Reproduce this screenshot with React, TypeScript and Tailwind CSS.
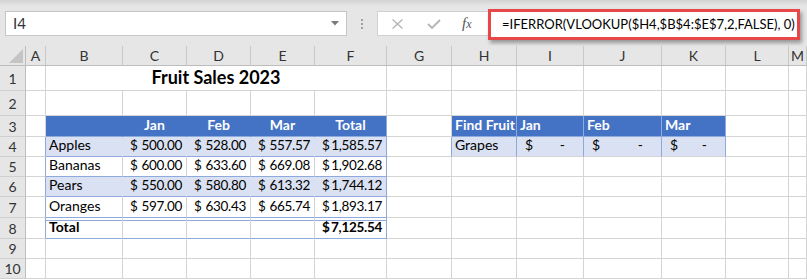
import React from "react";

const cellFont = { fontFamily: "Lato, 'Noto Sans', sans-serif" };

type CellProps = {
  className?: string;
  rc?: string;
  bc?: string;
  children?: React.ReactNode;
};

function Cell({ className = "", rc = "border-r-[#d4d4d4]", bc = "border-b-[#d4d4d4]", children }: CellProps) {
  return (
    <div className={`border-r border-b ${rc} ${bc} flex items-end overflow-hidden whitespace-nowrap text-[14px] leading-none text-black pb-[4px] ${className}`}>
      {children}
    </div>
  );
}

function RowHead({ n }: { n: number }) {
  return (
    <div className="bg-[#e6e6e6] border-r border-b border-r-[#bdbdbd] border-b-[#d0d0d0] flex items-center justify-center text-[14px] text-[#333]">
      {n}
    </div>
  );
}

function ColHead({ l }: { l: string }) {
  return (
    <div className="bg-[#e6e6e6] border-r border-b border-r-[#c8c8c8] border-b-[#bdbdbd] flex items-center justify-center text-[14px] text-[#333]">
      {l}
    </div>
  );
}

function Money({ v, bold = false }: { v: string; bold?: boolean }) {
  return (
    <div className={`flex w-full justify-between pl-[7px] pr-[4px] text-[13.5px] tracking-[-0.3px] ${bold ? "font-bold" : ""}`}>
      <span>$</span>
      <span>{v}</span>
    </div>
  );
}

const BLUE = "bg-[#4472c4]";
const LIGHT = "bg-[#d9e1f2]";
const DBL = "shadow-[inset_0_2px_0_#ffffff,inset_0_3px_0_#8ea9db]";

export default function App() {
  const rows = [
    { name: "Apples", v: ["500.00", "528.00", "557.57", "1,585.57"], fill: true },
    { name: "Bananas", v: ["600.00", "633.60", "669.08", "1,902.68"], fill: false },
    { name: "Pears", v: ["550.00", "580.80", "613.32", "1,744.12"], fill: true },
    { name: "Oranges", v: ["597.00", "630.43", "665.74", "1,893.17"], fill: false },
  ];
  const cols = ["A", "B", "C", "D", "E", "F", "G", "H", "I", "J", "K", "L", "M"];

  const emptyTail = (from: number) =>
    cols.slice(from).map((c) => <Cell key={c} />);

  return (
    <div className="w-[807px] h-[280px] overflow-hidden bg-white" style={cellFont}>
      {/* Formula bar area */}
      <div className="h-[46px] bg-[linear-gradient(#d2d2d2_0px,#e6e6e6_6px)] flex items-start pt-[11px]">
        <div className="ml-[5px] w-[342px] h-[25px] bg-white border border-[#c6c6c6] flex items-center justify-between pl-[7px] pr-[7px]">
          <span className="text-[15px] text-[#333]">I4</span>
          <svg width="8" height="5" viewBox="0 0 8 5"><path d="M0 0H8L4 4.5Z" fill="#7a7a7a" /></svg>
        </div>
        <div className="w-[30px] h-[25px] flex flex-col items-center justify-center gap-[2px]">
          <div className="w-[2px] h-[2px] bg-[#a0a0a0]" />
          <div className="w-[2px] h-[2px] bg-[#a0a0a0]" />
          <div className="w-[2px] h-[2px] bg-[#a0a0a0]" />
        </div>
        <div className="w-[111px] h-[25px] bg-white border-y border-l border-[#d0d0d0] flex items-center">
          <svg className="ml-[14px]" width="11" height="10" viewBox="0 0 11 10">
            <path d="M0.5 0.5L10.5 9.5M10.5 0.5L0.5 9.5" stroke="#b4b4b4" strokeWidth="1.3" fill="none" />
          </svg>
          <svg className="ml-[24px]" width="14" height="10" viewBox="0 0 14 10">
            <path d="M1 5L5 9L13 1" stroke="#b4b4b4" strokeWidth="1.8" fill="none" />
          </svg>
          <span className="ml-[21px] text-[15px] italic text-[#555]" style={{ fontFamily: "'Liberation Serif', serif" }}>
            f<span className="text-[12px]">x</span>
          </span>
        </div>
        <div className="-mt-[2px] w-[312px] h-[31px] bg-white border-[3px] border-[#e8474a] shadow-[2px_3px_4px_rgba(0,0,0,0.35)] flex items-center pl-[11px]">
          <span className="text-[13px] text-black whitespace-nowrap">=IFERROR(VLOOKUP($H4,$B$4:$E$7,2,FALSE), 0)</span>
        </div>
      </div>

      {/* Grid */}
      <div className="grid grid-cols-[26px_20px_77px_64px_64px_64px_72px_65px_65px_67px_78px_64px_63px_1fr] grid-rows-[20px_25px_25px_21px_20px_20px_20px_21px_21px_20px_20px]">
        {/* column header */}
        <div className="bg-[#e6e6e6] border-r border-b border-r-[#bdbdbd] border-b-[#bdbdbd] relative">
          <svg className="absolute right-[2px] bottom-[2px]" width="14" height="14" viewBox="0 0 14 14">
            <path d="M14 0V14H0Z" fill="#c4c4c4" />
          </svg>
        </div>
        {cols.map((c) => (
          <ColHead key={c} l={c} />
        ))}

        {/* Row 1 */}
        <RowHead n={1} />
        <Cell />
        <div className="col-span-5 border-r border-b border-r-[#d4d4d4] border-b-[#d4d4d4] flex items-end justify-center pb-[4px] text-[18px] font-bold leading-none">
          Fruit Sales 2023
        </div>
        {emptyTail(6)}

        {/* Row 2 */}
        <RowHead n={2} />
        {emptyTail(0)}

        {/* Row 3 */}
        <RowHead n={3} />
        <Cell />
        <Cell className={BLUE} rc="border-r-[#4472c4]" bc="border-b-[#8ea9db]" />
        {["Jan", "Feb", "Mar"].map((m) => (
          <Cell key={m} className={`${BLUE} justify-center font-bold text-white`} rc="border-r-[#4472c4]" bc="border-b-[#8ea9db]">
            {m}
          </Cell>
        ))}
        <Cell className={`${BLUE} justify-center font-bold text-white`} rc="border-r-[#8ea9db]" bc="border-b-[#8ea9db]">
          Total
        </Cell>
        <Cell />
        <Cell className={`${BLUE} font-bold text-white pl-[3px]`} rc="border-r-[#8ea9db]" bc="border-b-[#8ea9db]">
          Find Fruit
        </Cell>
        {["Jan", "Feb", "Mar"].map((m) => (
          <Cell key={m} className={`${BLUE} font-bold text-white pl-[3px]`} rc="border-r-[#8ea9db]" bc="border-b-[#8ea9db]">
            {m}
          </Cell>
        ))}
        <Cell />
        <Cell />

        {/* Rows 4-7 */}
        {rows.map((r, i) => {
          const fill = r.fill ? LIGHT : "";
          const inner = r.fill ? "border-r-[#d9e1f2]" : "border-r-[#d4d4d4]";
          return (
            <React.Fragment key={r.name}>
              <RowHead n={i + 4} />
              <Cell rc="border-r-[#8ea9db]" />
              <Cell className={`${fill} pl-[3px]`} rc={inner} bc="border-b-[#8ea9db]">
                {r.name}
              </Cell>
              <Cell className={fill} rc={inner} bc="border-b-[#8ea9db]">
                <Money v={r.v[0]} />
              </Cell>
              <Cell className={fill} rc={inner} bc="border-b-[#8ea9db]">
                <Money v={r.v[1]} />
              </Cell>
              <Cell className={fill} rc={inner} bc="border-b-[#8ea9db]">
                <Money v={r.v[2]} />
              </Cell>
              <Cell className={fill} rc="border-r-[#8ea9db]" bc="border-b-[#8ea9db]">
                <Money v={r.v[3]} />
              </Cell>
              <Cell rc={i === 0 ? "border-r-[#8ea9db]" : "border-r-[#d4d4d4]"} />
              {i === 0 ? (
                <>
                  <Cell className={`${LIGHT} pl-[3px]`} rc="border-r-[#8ea9db]">
                    Grapes
                  </Cell>
                  {[0, 1, 2].map((k) => (
                    <Cell key={k} className={LIGHT} rc="border-r-[#8ea9db]">
                      <div className="flex w-full justify-between pl-[8px] pr-[18px]">
                        <span>$</span>
                        <span>-</span>
                      </div>
                    </Cell>
                  ))}
                  <Cell />
                  <Cell />
                </>
              ) : (
                emptyTail(7)
              )}
            </React.Fragment>
          );
        })}

        {/* Row 8 Total */}
        <RowHead n={8} />
        <Cell rc="border-r-[#8ea9db]" />
        <Cell className={`font-bold pl-[3px] ${DBL}`} bc="border-b-[#8ea9db]">
          Total
        </Cell>
        <Cell className={DBL} bc="border-b-[#8ea9db]" />
        <Cell className={DBL} bc="border-b-[#8ea9db]" />
        <Cell className={DBL} bc="border-b-[#8ea9db]" />
        <Cell className={DBL} rc="border-r-[#8ea9db]" bc="border-b-[#8ea9db]">
          <Money v="7,125.54" bold />
        </Cell>
        {emptyTail(6)}

        {/* Rows 9-10 */}
        <RowHead n={9} />
        {emptyTail(0)}
        <RowHead n={10} />
        {emptyTail(0)}
      </div>
    </div>
  );
}
